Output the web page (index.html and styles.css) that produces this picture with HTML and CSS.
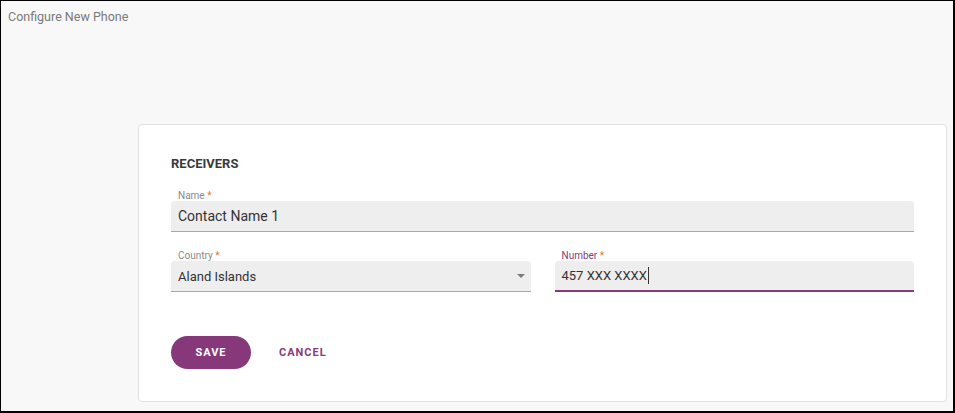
FILE: index.html
```
<!DOCTYPE html>
<html lang="en">
<head>
<meta charset="utf-8">
<title>Configure New Phone</title>
<link rel="stylesheet" href="styles.css">
</head>
<body>
<div class="frame">
  <div class="page-title">Configure New Phone</div>
  <div class="card">
    <h2 class="section-title">RECEIVERS</h2>
    <div class="field">
      <label class="field-label">Name <span class="req">*</span></label>
      <div class="field-box"><span class="field-value large">Contact Name 1</span></div>
    </div>
    <div class="row">
      <div class="field">
        <label class="field-label">Country <span class="req">*</span></label>
        <div class="field-box select"><span class="field-value">Aland Islands</span><span class="arrow"></span></div>
      </div>
      <div class="field focused">
        <label class="field-label">Number <span class="req">*</span></label>
        <div class="field-box"><span class="field-value">457 XXX XXXX</span><span class="caret"></span></div>
      </div>
    </div>
    <div class="actions">
      <button class="btn btn-primary">SAVE</button>
      <button class="btn btn-text">CANCEL</button>
    </div>
  </div>
</div>
</body>
</html>
```
FILE: styles.css
```
* { box-sizing: border-box; }
html, body { margin: 0; padding: 0; }
body {
  font-family: Roboto, "Liberation Sans", Arial, sans-serif;
  background: #f8f8f8;
}
.frame {
  width: 955px;
  height: 413px;
  border-style: solid;
  border-color: #000;
  border-width: 1px 2px 2px 1px;
  background: #f8f8f8;
  padding: 8px 6px 0 7px;
  overflow: hidden;
}
.page-title {
  font-size: 12.5px;
  line-height: 16px;
  color: #7a7a7a;
}
.card {
  margin: 99px 0 0 130px;
  background: #fff;
  border: 1px solid #e2e2e2;
  border-radius: 4px;
  padding: 31px 32px 32px 32px;
}
.section-title {
  margin: 0;
  font-size: 13px;
  line-height: 16px;
  font-weight: 700;
  color: #3a3a3a;
}
.field { display: flex; flex-direction: column; }
.section-title + .field { margin-top: 18px; }
.field-label {
  font-size: 10px;
  line-height: 11px;
  color: #8a8a8a;
  padding-left: 7px;
}
.req { color: #e07a2a; }
.field-box {
  height: 31px;
  background: #eeeeee;
  border-bottom: 1px solid #a8a8a8;
  border-radius: 4px 4px 0 0;
  display: flex;
  align-items: center;
  padding: 0 7px;
  position: relative;
}
.field-value {
  font-size: 13px;
  color: #333;
}
.field-value.large { font-size: 14px; }
.row {
  display: grid;
  grid-template-columns: 1fr 1fr;
  column-gap: 24px;
  margin-top: 18px;
}
.select .arrow {
  position: absolute;
  right: 6px;
  top: 13px;
  width: 0;
  height: 0;
  border-left: 4.5px solid transparent;
  border-right: 4.5px solid transparent;
  border-top: 4.5px solid #7a7a7a;
}
.focused .field-label { color: #8a3a7c; }
.focused .field-box { border-bottom: 2px solid #8a3a7c; }
.caret {
  display: inline-block;
  width: 1px;
  height: 17px;
  background: #333;
  margin-left: 1px;
}
.actions {
  display: flex;
  align-items: center;
  gap: 12px;
  margin-top: 44px;
}
.btn {
  font-family: Roboto, "Liberation Sans", Arial, sans-serif;
  font-size: 11px;
  font-weight: 700;
  letter-spacing: 1px;
  border: none;
  cursor: pointer;
}
.btn-primary {
  width: 80px;
  height: 33px;
  border-radius: 17px;
  background: #86387a;
  color: #fff;
}
.btn-text {
  background: none;
  color: #8a3a7c;
  padding: 0 16px;
  height: 33px;
}
```
